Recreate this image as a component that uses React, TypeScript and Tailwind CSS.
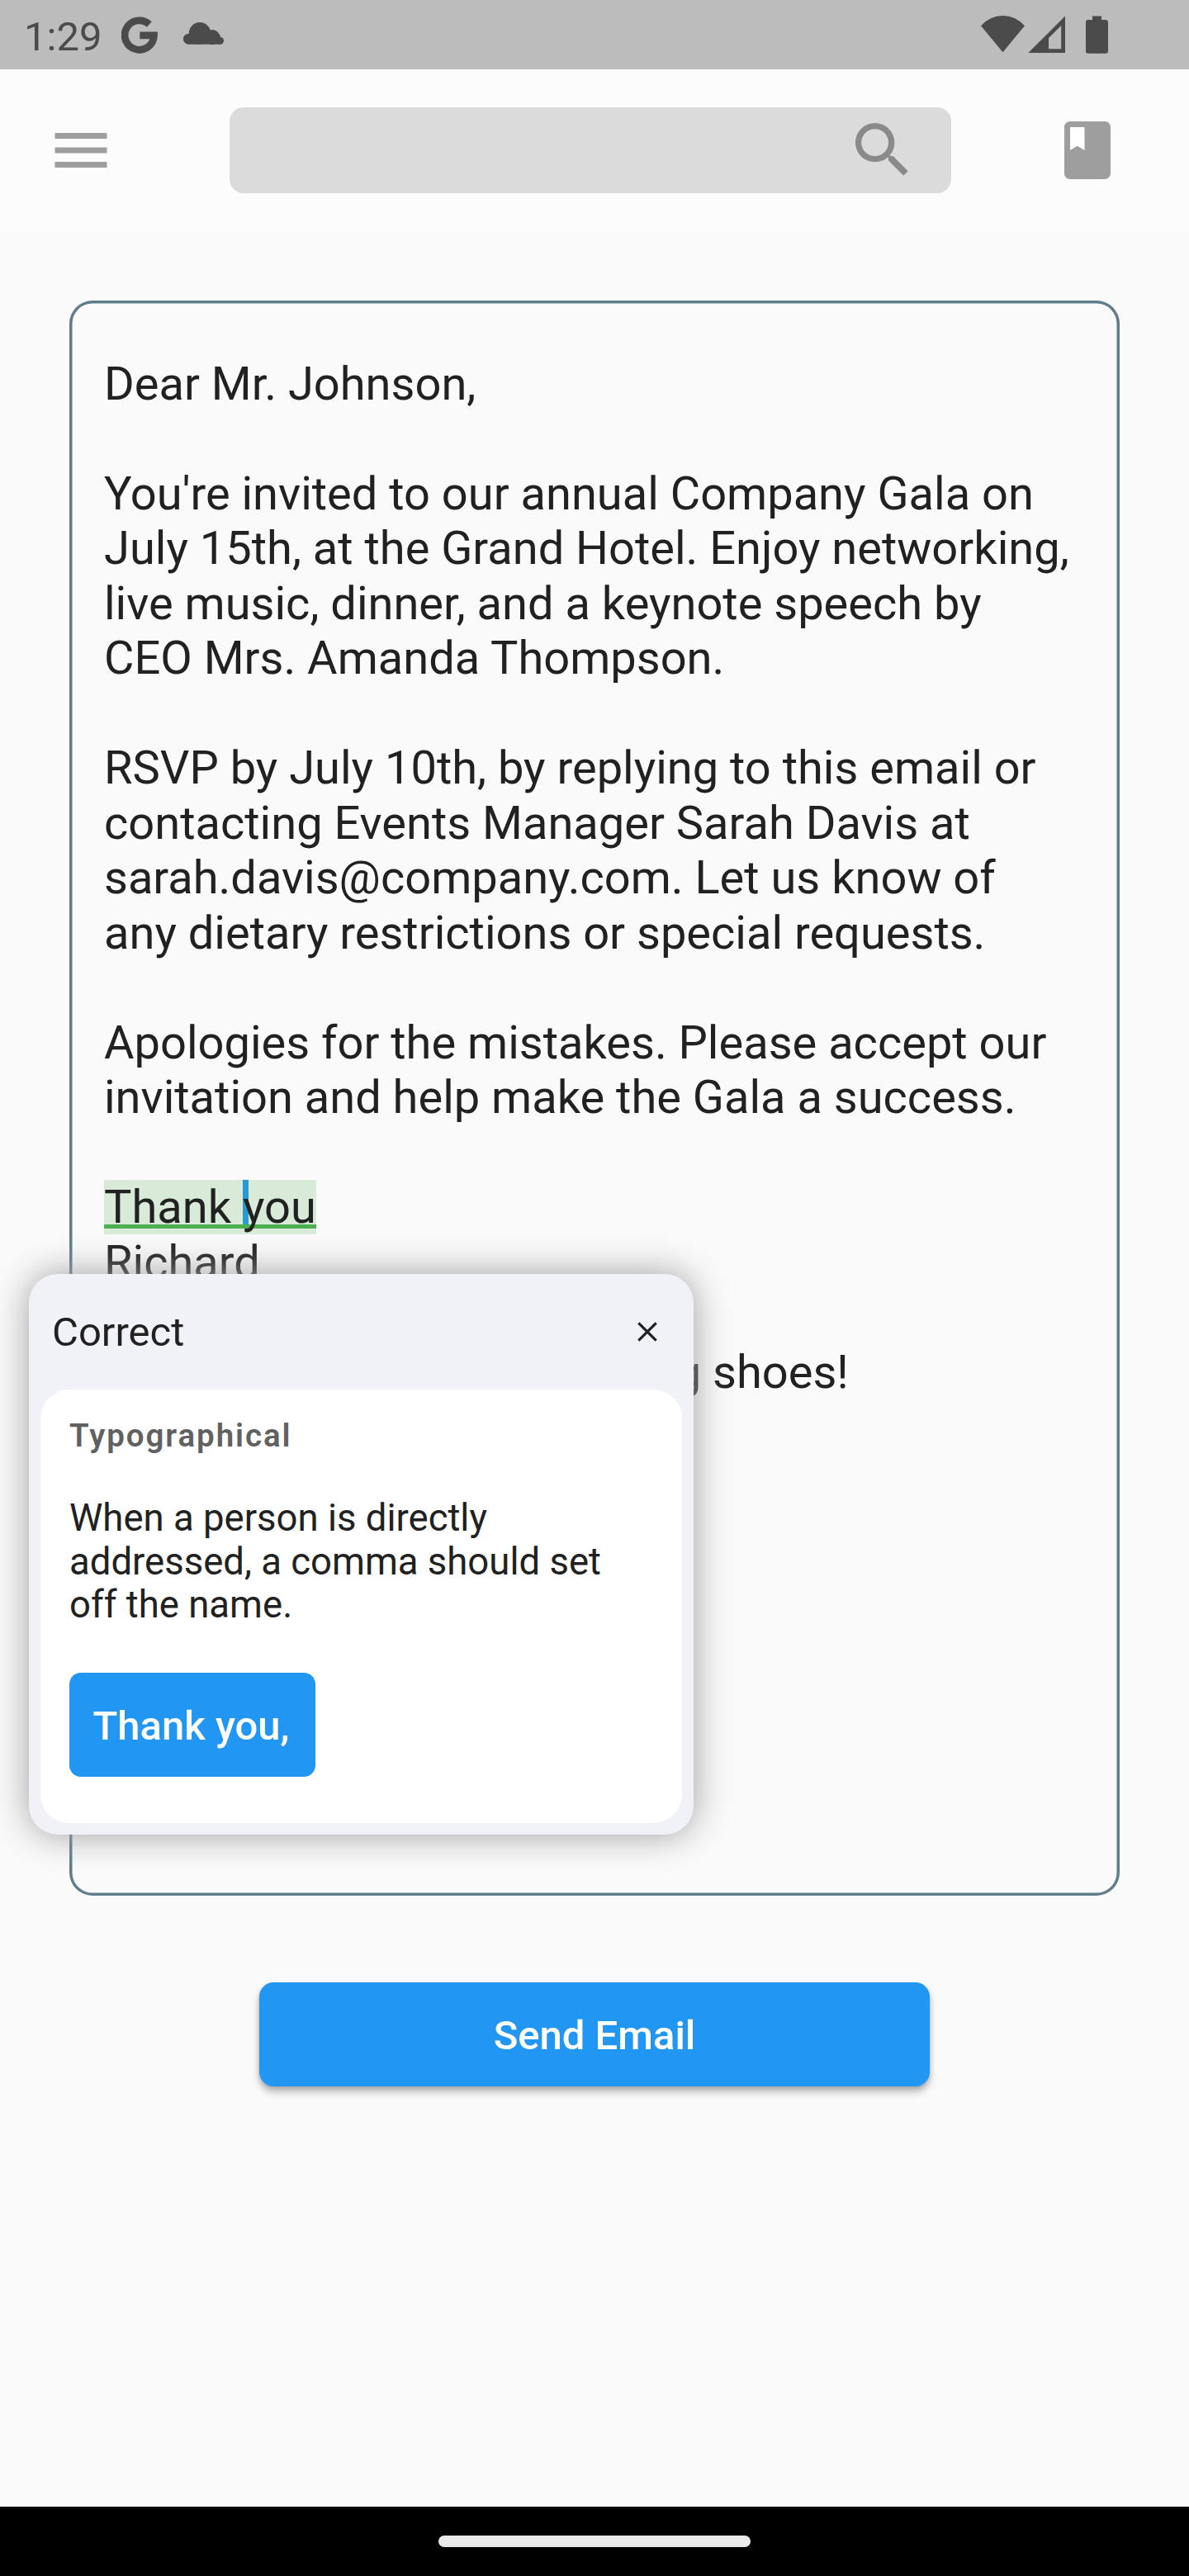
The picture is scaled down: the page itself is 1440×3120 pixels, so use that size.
import React from "react";

const body = [
  "Dear Mr. Johnson,",
  "",
  "You're invited to our annual Company Gala on",
  "July 15th, at the Grand Hotel. Enjoy networking,",
  "live music, dinner, and a keynote speech by",
  "CEO Mrs. Amanda Thompson.",
  "",
  "RSVP by July 10th, by replying to this email or",
  "contacting Events Manager Sarah Davis at",
  "sarah.davis@company.com. Let us know of",
  "any dietary restrictions or special requests.",
  "",
  "Apologies for the mistakes. Please accept our",
  "invitation and help make the Gala a success.",
  "",
];

function StatusBar() {
  return (
    <div className="flex h-[84px] items-center bg-[#bcbcbc] pl-[29px] text-[#4b4b4b]">
      <span className="w-[118px] pt-[5px] text-[49px] leading-[79px]">1:29</span>
      <svg className="h-[45px] w-[44px]" viewBox="0 0 44 45" fill="none" stroke="currentColor" strokeWidth="8.7">
        <path d="M33.8 9.5A17.7 17.7 0 1 0 39.5 22.9H22.3" />
      </svg>
      <svg className="mb-[3px] ml-[31px] h-[27px] w-[49px]" viewBox="0 0 49 27" fill="currentColor">
        <circle cx="6.5" cy="20.2" r="6.5" />
        <circle cx="20" cy="13.3" r="13.2" />
        <circle cx="35.3" cy="18" r="9" />
        <circle cx="44.6" cy="22.3" r="4.4" />
        <rect x="6.5" y="15" width="38.1" height="11.7" />
      </svg>
      <svg className="ml-[917px] h-[46px] w-[154px]" viewBox="0 0 154 46" fill="currentColor">
        <path d="M0 12.3a34.7 34.7 0 0 1 53 0L26.5 44.3z" />
        <path fillRule="evenodd" d="M57.3 45L102 .5V45zM82 27V40.2H97.2V12z" />
        <path d="M135 .5h11v4.5h5.5a2.7 2.7 0 0 1 2.500 2.700v35.300a2.700 2.700 0 0 1-2.700 2.700h-21.600a2.700 2.700 0 0 1-2.700-2.700v-35.300a2.700 2.700 0 0 1 2.700-2.700h5.300z" />
      </svg>
    </div>
  );
}

function TopBar() {
  return (
    <header className="flex h-[196px] items-center bg-[#fcfcfc]">
      <svg className="ml-[56px] size-[84px] text-[#9e9e9e]" viewBox="0 0 24 24" fill="currentColor">
        <path d="M3 18h18v-2H3v2zm0-5h18v-2H3v2zm0-7v2h18V6H3z" />
      </svg>
      <div className="ml-[138px] flex h-[104px] w-[874px] items-center justify-end rounded-[17px] bg-[#dbdbdb] pr-[39.5px]">
        <svg className="size-[87.5px] text-[#8a8a8a]" viewBox="0 0 24 24" fill="currentColor">
          <path d="M15.5 14h-.79l-.28-.27A6.471 6.471 0 0 0 16 9.5 6.5 6.5 0 1 0 9.5 16c1.61 0 3.09-.59 4.23-1.57l.27.28v.79l5 4.99L20.49 19l-4.99-5zm-6 0C7.01 14 5 11.99 5 9.5S7.01 5 9.5 5 14 7.01 14 9.5 11.99 14 9.5 14z" />
        </svg>
      </div>
      <svg className="ml-[122.5px] size-[84px] text-[#9e9e9e]" viewBox="0 0 24 24" fill="currentColor">
        <path fill="#fff" d="M5 3h8v10H5z" />
        <path d="M18 2H6c-1.1 0-2 .9-2 2v16c0 1.1.9 2 2 2h12c1.1 0 2-.9 2-2V4c0-1.1-.9-2-2-2zM6 4h5v8l-2.5-1.5L6 12V4z" />
      </svg>
    </header>
  );
}

function CorrectionPopup() {
  return (
    <section className="absolute top-[1543px] left-[35px] h-[679px] w-[805px] rounded-[35px] bg-[#f1f2f8] px-[14px] pb-[14px] shadow-[0_0_44px_#9e9e9e]">
      <div className="flex h-[140px] items-center justify-between pr-[27px] pl-[14px]">
        <h2 className="pt-[2px] text-[49px] leading-[56px]">Correct</h2>
        <svg className="size-[30px]" viewBox="0 0 30 30" stroke="currentColor" strokeWidth="3.2">
          <path d="M4.3 4.3L25.7 25.7M25.7 4.3L4.3 25.7" />
        </svg>
      </div>
      <div className="flex h-[525px] flex-col items-start rounded-[35px] bg-white px-[35px] pt-[33px]">
        <h3 className="text-[38.5px] leading-[46px] font-semibold tracking-[1.93px] text-[#616161]">Typographical</h3>
        <p className="mt-[51px] text-[45.5px] leading-[52.5px] whitespace-nowrap">
          When a person is directly
          <br />
          addressed, a comma should set
          <br />
          off the name.
        </p>
        <button className="mt-[55.5px] h-[126px] w-[298px] rounded-[14px] bg-[#2196f3] pt-[3px] pr-[3px] text-[49px] leading-[123px] font-medium text-white">
          Thank you,
        </button>
      </div>
    </section>
  );
}

export default function App() {
  return (
    <div className="relative flex h-[3120px] w-[1440px] flex-col overflow-hidden bg-[#fafafa] font-['Roboto',sans-serif] text-[#212121]">
      <StatusBar />
      <TopBar />
      <main className="flex flex-1 flex-col items-center pt-[84px]">
        <div className="h-[1932px] w-[1272px] rounded-[28px] px-[42px] pt-[67.5px] text-[56px] leading-[66.5px] whitespace-nowrap shadow-[inset_0_0_0_3.5px_#607d8b]">
          {body.map((line, i) => (
            <p key={i} className="h-[66.5px]">{line}</p>
          ))}
          <p className="h-[66.5px]">
            <span className="relative isolate inline-block h-[66px] bg-[#d8ebd8]">
              <span className="absolute top-0 left-[168px] -z-10 h-[54px] w-[7px] bg-[#2a9ad5]" />
              <span className="absolute bottom-[7px] left-0 -z-10 h-[5px] w-full bg-[#4caf50]" />
              Thank you
            </span>
          </p>
          <p className="h-[66.5px]">Richard</p>
          <p className="h-[66.5px]" />
          <p className="h-[66.5px] pl-[4px]">PS Please wear your dancing shoes!</p>
        </div>
        <button className="mt-[105px] h-[126px] w-[812px] rounded-[17.5px] bg-[#2196f3] pt-[3px] text-[49px] leading-[123px] font-medium text-white shadow-[0_7px_10px_rgba(0,0,0,0.25),0_2px_5px_rgba(0,0,0,0.15)]">
          Send Email
        </button>
      </main>
      <footer className="flex h-[84px] items-center justify-center bg-black">
        <div className="h-[14px] w-[378px] rounded-full bg-[#eaeaea]" />
      </footer>
      <CorrectionPopup />
    </div>
  );
}
